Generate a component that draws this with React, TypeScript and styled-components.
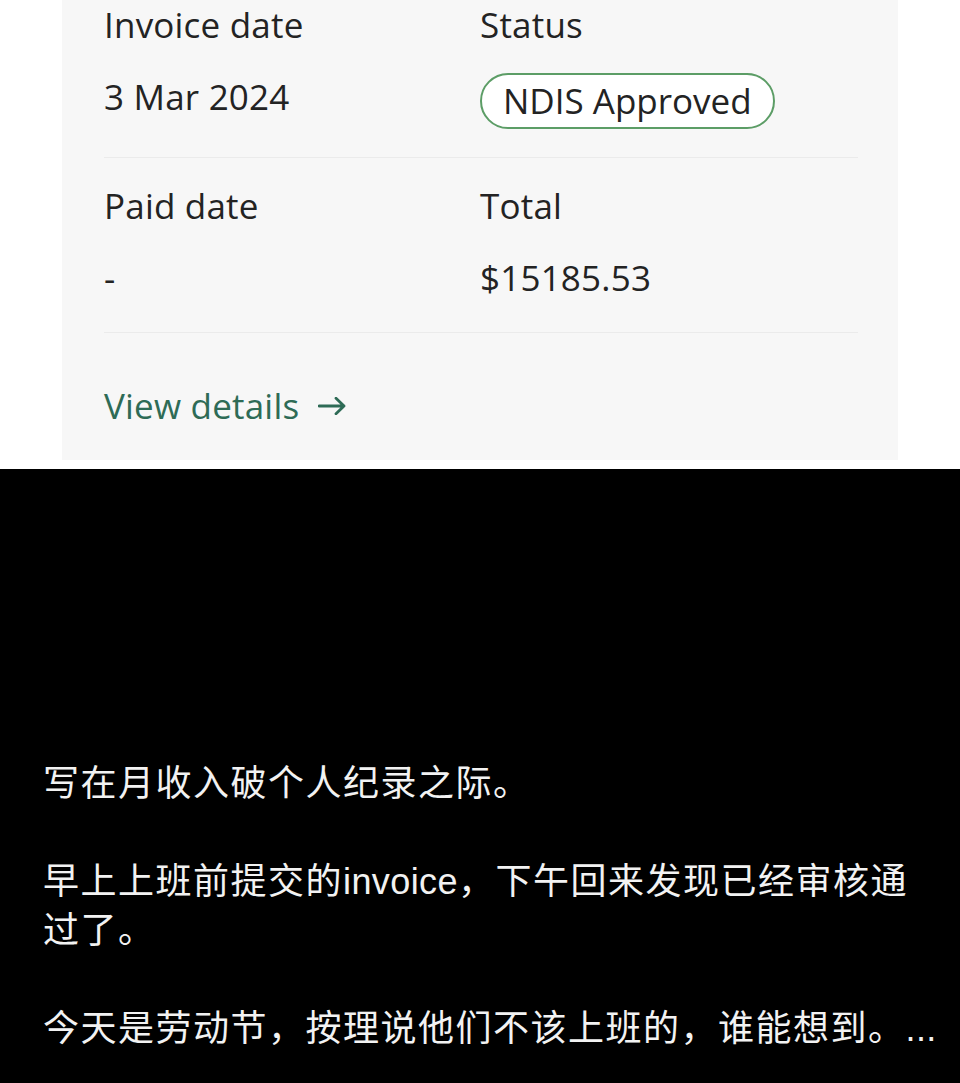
import React from 'react';
import styled, {createGlobalStyle} from 'styled-components';

const GlobalStyle = createGlobalStyle`
  html, body {
    margin: 0;
    padding: 0;
    background: #ffffff;
  }
  #root {
    min-height: 1083px;
    display: flex;
    flex-direction: column;
  }
`;

const Top = styled.div`
  background: #ffffff;
  padding: 0 62px 9px;
`;

const Card = styled.div`
  background: #f7f7f7;
  padding: 1px 40px 30px 42px;
  font-family: "Open Sans", "Liberation Sans", sans-serif;
  font-size: 35px;
  font-weight: 500;
  line-height: 48px;
  letter-spacing: 0.2px;
  color: #232323;
`;

const Row = styled.div<{ $first?: boolean }>`
  display: grid;
  grid-template-columns: 376px 1fr;
  align-items: start;
  padding: ${p => (p.$first ? '0' : '24px')} 0 ${p => (p.$first ? '28px' : '30px')};
  border-bottom: 1px solid #ebebeb;
`;

const Cell = styled.div`
  display: flex;
  flex-direction: column;
  align-items: flex-start;
  gap: 24px;
`;

const Label = styled.div``;

const Value = styled.div``;

const Badge = styled.div`
  box-sizing: border-box;
  height: 56px;
  padding: 2px 21px;
  border: 2px solid #5c9d66;
  border-radius: 28px;
  background: #ffffff;
  line-height: 48px;
  letter-spacing: 0;
`;

const Link = styled.div`
  margin-top: 49px;
  display: flex;
  align-items: center;
  gap: 19px;
  color: #2e6b56;
`;

const Dark = styled.div`
  flex: 1;
  background: #000000;
  padding: 287px 15px 30px 43px;
  font-family: "Noto Sans CJK SC", "Noto Sans", sans-serif;
  font-size: 36px;
  letter-spacing: 1.5px;
  line-height: 49px;
  color: #f2f2f2;
`;

const Para = styled.p`
  margin: 0 0 49px;
  &:last-child {
    margin-bottom: 0;
  }
`;

const Latin = styled.span`
  font-family: "Liberation Sans", "Noto Sans", sans-serif;
  letter-spacing: 0.4px;
  line-height: 1;
`;

function ArrowIcon() {
  return (
    <svg width="28" height="18" viewBox="0 0 28 18" fill="none">
      <path d="M1 9H26M18 1.2L26 9L18 16.8" stroke="#2e6b56" strokeWidth="2.8" strokeLinecap="round" strokeLinejoin="round"/>
    </svg>
  );
}

const rows = [
  {a: 'Invoice date', av: '3 Mar 2024', b: 'Status', bv: 'NDIS Approved', badge: true},
  {a: 'Paid date', av: '-', b: 'Total', bv: '$15185.53', badge: false},
];

export default function App() {
  return (
    <>
      <GlobalStyle/>
      <Top>
        <Card>
          {rows.map((r, i) => (
            <Row key={r.a} $first={i === 0}>
              <Cell>
                <Label>{r.a}</Label>
                <Value>{r.av}</Value>
              </Cell>
              <Cell>
                <Label>{r.b}</Label>
                {r.badge ? <Badge>{r.bv}</Badge> : <Value>{r.bv}</Value>}
              </Cell>
            </Row>
          ))}
          <Link>
            View details
            <ArrowIcon/>
          </Link>
        </Card>
      </Top>
      <Dark>
        <Para>写在月收入破个人纪录之际。</Para>
        <Para>早上上班前提交的<Latin>invoice</Latin>，下午回来发现已经审核通过了。</Para>
        <Para>今天是劳动节，按理说他们不该上班的，谁能想到。<Latin>...</Latin></Para>
      </Dark>
    </>
  );
}
